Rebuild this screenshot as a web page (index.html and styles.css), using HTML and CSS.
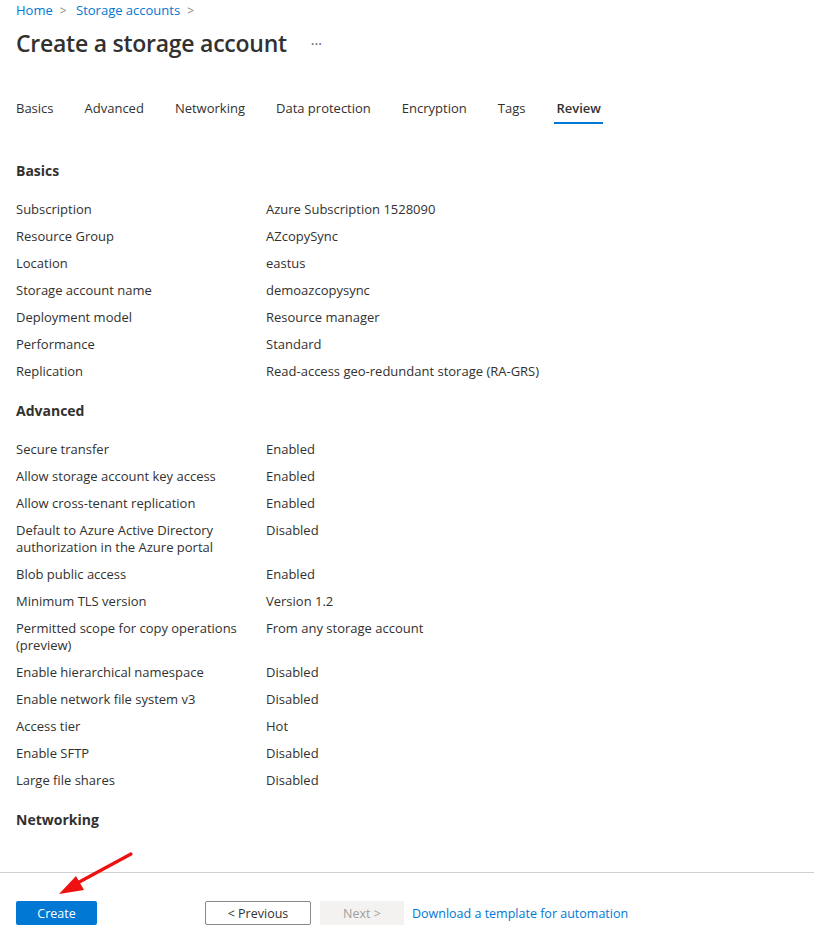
FILE: index.html
```html
<!DOCTYPE html>
<html lang="en">
<head>
  <meta charset="UTF-8">
  <meta name="viewport" content="width=device-width, initial-scale=1.0">
  <title>Create a storage account</title>
  <link rel="stylesheet" href="styles.css">
</head>
<body>
  <div id="page">
    <div class="content">
      <nav class="breadcrumb">
        <a href="#">Home</a><span class="sep">&gt;</span>
        <a href="#">Storage accounts</a><span class="sep">&gt;</span>
      </nav>
      <div class="title-row">
        <h1>Create a storage account</h1>
        <span class="more">&middot;&middot;&middot;</span>
      </div>

      <ul class="tabs">
        <li>Basics</li>
        <li>Advanced</li>
        <li>Networking</li>
        <li>Data protection</li>
        <li>Encryption</li>
        <li>Tags</li>
        <li class="active">Review</li>
      </ul>

      <h2 class="section-title first">Basics</h2>
      <dl class="summary">
        <dt>Subscription</dt><dd>Azure Subscription 1528090</dd>
        <dt>Resource Group</dt><dd>AZcopySync</dd>
        <dt>Location</dt><dd>eastus</dd>
        <dt>Storage account name</dt><dd>demoazcopysync</dd>
        <dt>Deployment model</dt><dd>Resource manager</dd>
        <dt>Performance</dt><dd>Standard</dd>
        <dt>Replication</dt><dd>Read-access geo-redundant storage (RA-GRS)</dd>
      </dl>

      <h2 class="section-title">Advanced</h2>
      <dl class="summary">
        <dt>Secure transfer</dt><dd>Enabled</dd>
        <dt>Allow storage account key access</dt><dd>Enabled</dd>
        <dt>Allow cross-tenant replication</dt><dd>Enabled</dd>
        <dt>Default to Azure Active Directory authorization in the Azure portal</dt><dd>Disabled</dd>
        <dt>Blob public access</dt><dd>Enabled</dd>
        <dt>Minimum TLS version</dt><dd>Version 1.2</dd>
        <dt>Permitted scope for copy operations (preview)</dt><dd>From any storage account</dd>
        <dt>Enable hierarchical namespace</dt><dd>Disabled</dd>
        <dt>Enable network file system v3</dt><dd>Disabled</dd>
        <dt>Access tier</dt><dd>Hot</dd>
        <dt>Enable SFTP</dt><dd>Disabled</dd>
        <dt>Large file shares</dt><dd>Disabled</dd>
      </dl>

      <h2 class="section-title">Networking</h2>
    </div>

    <div class="footer">
      <button class="btn primary">Create</button>
      <button class="btn outline">&lt; Previous</button>
      <button class="btn disabled">Next &gt;</button>
      <a class="link" href="#">Download a template for automation</a>
    </div>

    <!-- annotation arrow pointing at Create -->
    <svg class="arrow" width="814" height="944" viewBox="0 0 814 944">
      <line x1="131" y1="854" x2="70" y2="887" stroke="#ee1111" stroke-width="3.2" stroke-linecap="round"/>
      <polygon points="59,894 76,876 84,890" fill="#ee1111"/>
    </svg>
  </div>
</body>
</html>
```

FILE: styles.css
```css
* {margin: 0; padding: 0; box-sizing: border-box;}
ul {list-style-type: none;}
body {
  font-family: "Open Sans", "Noto Sans", sans-serif;
  color: #323130;
  background: #fff;
}
#page {
  position: relative;
  width: 814px;
  height: 944px;
  overflow: hidden;
}
.content {
  padding: 0 16px;
}

/* header */
.breadcrumb {
  font-size: 13px;
  line-height: 20px;
}
.breadcrumb a {
  color: #0078d4;
  text-decoration: none;
}
.breadcrumb .sep {
  color: #8a8886;
  margin: 0 6px 0 7px;
  font-size: 12px;
}
.title-row {
  display: flex;
  align-items: center;
  margin-top: 6px;
  height: 32px;
}
.title-row h1 {
  font-size: 23px;
  font-weight: 600;
  letter-spacing: -0.25px;
}
.title-row .more {
  margin-left: 24px;
  font-size: 14px;
  color: #605e5c;
}

/* tabs */
.tabs {
  display: flex;
  gap: 31px;
  margin-top: 39px;
  font-size: 13px;
  line-height: 20px;
}
.tabs li {
  padding-bottom: 4px;
  border-bottom: 2px solid transparent;
}
.tabs li.active {
  font-weight: 600;
  border-bottom-color: #0078d4;
  padding: 0 2px 4px;
  margin-left: -2px;
}

/* summary */
.section-title {
  font-size: 14px;
  font-weight: 700;
  line-height: 20px;
  margin-top: 16px;
}
.section-title.first {
  margin-top: 37px;
}
.summary {
  display: grid;
  grid-template-columns: 230px 1fr;
  column-gap: 20px;
  margin-top: 15px;
  font-size: 13px;
  line-height: 17px;
}
.summary dt,
.summary dd {
  padding: 5px 0;
}

/* footer */
.footer {
  position: absolute;
  left: 0;
  right: 0;
  top: 872px;
  border-top: 1px solid #d2d0ce;
  padding: 28px 16px 0;
  display: flex;
  align-items: center;
}
.btn {
  font-family: inherit;
  font-size: 12.5px;
  height: 24px;
  border: 1px solid transparent;
  cursor: pointer;
}
.btn.primary {
  width: 81px;
  background: #0078d4;
  color: #fff;
  border-radius: 2px;
}
.btn.outline {
  width: 106px;
  margin-left: 108px;
  background: #fff;
  border-color: #8a8886;
  border-radius: 2px;
  color: #323130;
}
.btn.disabled {
  width: 84px;
  margin-left: 9px;
  background: #f3f2f1;
  color: #a19f9d;
}
.link {
  margin-left: 8px;
  font-size: 12.5px;
  color: #0078d4;
  text-decoration: none;
}

.arrow {
  position: absolute;
  left: 0;
  top: 0;
  pointer-events: none;
}
```
